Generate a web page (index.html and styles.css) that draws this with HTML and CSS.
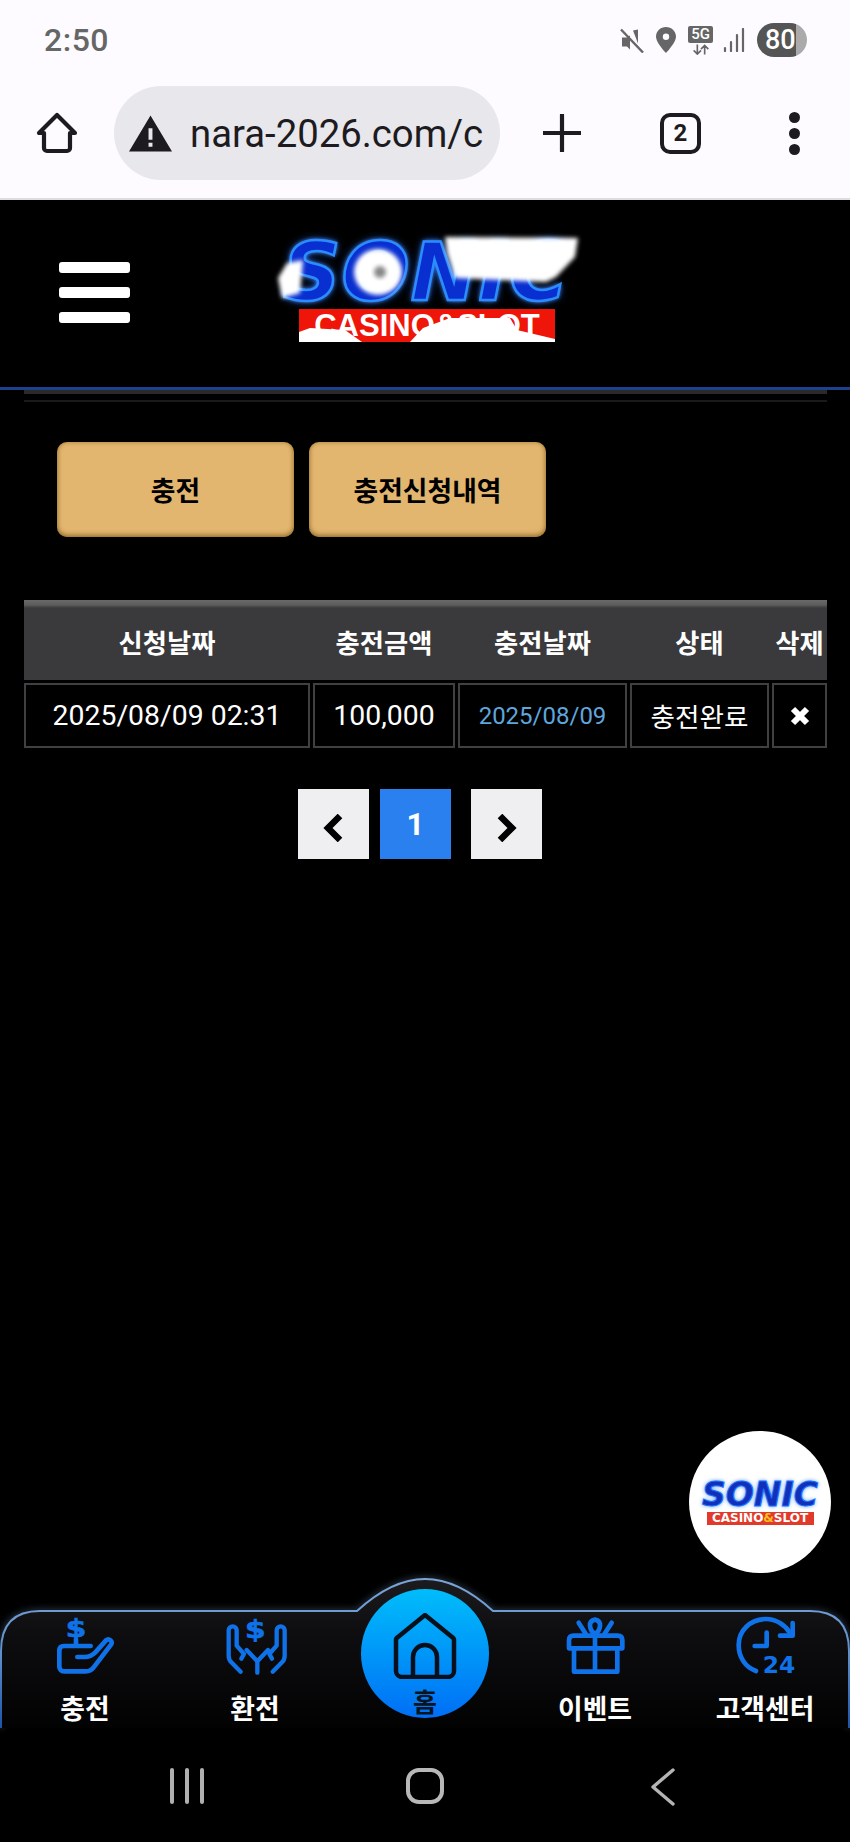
FILE: index.html
```html
<!DOCTYPE html>
<html lang="ko">
<head>
<meta charset="utf-8">
<title>충전</title>
<link rel="stylesheet" href="styles.css">
</head>
<body>
<div class="screen">
  <div class="statusbar">
    <span class="time">2:50</span>
    <div class="status-icons">
      <svg class="si-mute" viewBox="0 0 24 24"><path d="M2 9h5l3-2v14l-3-3H2z M13 2l5-1v14z" fill="#666"/><path d="M1 1l22 23" stroke="#666" stroke-width="2.4"/></svg>
      <svg class="si-pin" viewBox="0 0 20 26"><path fill-rule="evenodd" d="M10 0c5.5 0 10 4.2 10 9.6C20 16 10 26 10 26S0 16 0 9.6C0 4.2 4.500 0 10 0zm0 6.500a3.200 3.200 0 1 0 0 6.400 3.200 3.200 0 0 0 0-6.400z" fill="#666"/></svg>
      <div class="si-net"><span class="si-5g">5G</span><svg viewBox="0 0 24 11" class="si-arrows"><path d="M8 0v10M4 6.500l4 4 4-4M16 11V1M12 5l4-4 4 4" fill="none" stroke="#666" stroke-width="1.800"/></svg></div>
      <svg class="si-signal" viewBox="0 0 22 24"><path d="M2 20v3M8 14v9M14 7v16M20 1v22" stroke="#666" stroke-width="2.200" stroke-linecap="round"/></svg>
      <div class="battery"><span>80</span></div>
    </div>
  </div>

  <div class="browserbar">
    <svg class="b-home" viewBox="0 0 42 42"><path d="M21 3 3 21h5v15a3 3 0 0 0 3 3h20a3 3 0 0 0 3-3V21h5z" fill="none" stroke="#1d1b20" stroke-width="4.200" stroke-linejoin="round"/></svg>
    <div class="urlpill">
      <svg class="b-warn" viewBox="0 0 44 37"><path fill-rule="evenodd" d="M22 0l22 37H0zM20 13v12h4V13zm0 15v4h4v-4z" fill="#1d1b20"/></svg>
      <span class="url">nara-2026.com/c</span>
    </div>
    <svg class="b-plus" viewBox="0 0 38 38"><path d="M19 1v36M1 19h36" stroke="#1d1b20" stroke-width="4.200" stroke-linecap="round"/></svg>
    <div class="tabs">2</div>
    <div class="dots"><i></i><i></i><i></i></div>
  </div>

  <header class="siteheader">
    <div class="burger"><i></i><i></i><i></i></div>
    <div class="logo">
      <div class="logo-word">SONIC</div>
      <div class="logo-bar">CASINO&amp;SLOT</div>
      <svg class="logo-glitch" viewBox="0 0 350 130">
        <defs><filter id="soft" x="-20%" y="-20%" width="140%" height="140%"><feGaussianBlur stdDeviation="2.200"/></filter></defs>
        <g filter="url(#soft)" fill="#fff">
          <polygon points="195,17 328,18 325,37 306,57 296,62 205,58 197,33"/>
          <polygon points="28,58 37,43 53,40 50,73 32,78"/>
          <ellipse cx="128" cy="52" rx="24" ry="23"/>
        </g>
        <ellipse cx="130" cy="52" rx="6" ry="6" fill="#888" filter="url(#soft)"/>
        <polygon points="49,122 49,112 60,108 95,110 112,122" fill="#fff"/>
        <polygon points="160,122 173,108 200,98 260,98 267,110 305,119 305,122" fill="#fff"/>
      </svg>
    </div>
  </header>
  <div class="rule-blue"></div>
  <div class="rule-gray"></div>
  <div class="rule-faint"></div>

  <main class="content">
    <div class="tabsrow">
      <a class="goldbtn">충전</a>
      <a class="goldbtn">충전신청내역</a>
    </div>

    <div class="grid">
      <div class="grid-head grid-cols">
        <span>신청날짜</span><span>충전금액</span><span>충전날짜</span><span>상태</span><span>삭제</span>
      </div>
      <div class="grid-row grid-cols">
        <span class="cell">2025/08/09 02:31</span>
        <span class="cell">100,000</span>
        <span class="cell cell-date">2025/08/09</span>
        <span class="cell cell-ko">충전완료</span>
        <span class="cell"><svg class="x-icon" viewBox="0 0 20 20"><path d="M3 3l14 14M17 3 3 17" stroke="#fff" stroke-width="6"/></svg></span>
      </div>
    </div>

    <div class="pager">
      <a class="page"><svg class="chev" viewBox="0 0 21 28"><path d="M17 2 5 14l12 12" fill="none" stroke="#000" stroke-width="6.500"/></svg></a>
      <a class="page page-on">1</a>
      <a class="page page-next"><svg class="chev" viewBox="0 0 21 28"><path d="M4 2l12 12L4 26" fill="none" stroke="#000" stroke-width="6.500"/></svg></a>
    </div>
  </main>

  <div class="fab">
    <div class="fab-word">SONIC</div>
    <div class="fab-bar">CASINO<b>&amp;</b>SLOT</div>
  </div>

  <nav class="tabbar">
    <svg class="tabbar-bg" viewBox="0 0 850 153">
      <defs>
        <linearGradient id="barfill" x1="0" y1="0" x2="0" y2="1"><stop offset="0" stop-color="#1c1c1e"/><stop offset=".35" stop-color="#0e0e10"/><stop offset="1" stop-color="#020203"/></linearGradient>
        <linearGradient id="barline" x1="0" y1="0" x2="0" y2="1"><stop offset="0" stop-color="#7ba5d8"/><stop offset=".5" stop-color="#5f8fca"/><stop offset="1" stop-color="#1a55a8"/></linearGradient>
        <filter id="barglow" x="-5%" y="-20%" width="110%" height="140%"><feGaussianBlur stdDeviation="3"/></filter>
      </defs>
      <path d="M1 153V76Q1 36 40 36H357Q392 4 425 4 458 4 493 36H810Q849 36 849 76V153" fill="none" stroke="#5d7a9d" stroke-width="4" opacity=".5" filter="url(#barglow)"/>
      <path d="M1 153V76Q1 36 40 36H357Q392 4 425 4 458 4 493 36H810Q849 36 849 76V153" fill="url(#barfill)" stroke="url(#barline)" stroke-width="2"/>
    </svg>
    <a class="tab">
      <svg class="tab-icon" viewBox="165 135 180 180"><g fill="none" stroke="#0f72e8" stroke-width="14" stroke-linecap="round" stroke-linejoin="round"><path d="M228 205v20M232 258h22c14 0 24-6 32-14l32-36a10 10 0 0 1 15 13l-52 68c-6 8-14 12-24 12h-65c-8 0-14-6-14-14v-48c0-10 6-14 14-14h80"/></g><text transform="translate(228 198) scale(1.2 1)" class="icon-text" text-anchor="middle">$</text></svg>
      <span class="tab-label">충전</span>
    </a>
    <a class="tab">
      <svg class="tab-icon" viewBox="675 135 180 180"><g fill="none" stroke="#0f72e8" stroke-width="13" stroke-linecap="round" stroke-linejoin="round"><path d="M772 305v-34l-32-34M772 271l32-34"/><path d="M722 302l-28-28c-6-6-8-12-8-20v-76a12 12 0 0 1 24 0v46l22 25-8 14"/><path d="M818 302l28-28c6-6 8-12 8-20v-76a12 12 0 0 0-24 0v46l-22 25 8 14"/></g><text transform="translate(766 200) scale(1.2 1)" class="icon-text" text-anchor="middle">$</text></svg>
      <span class="tab-label">환전</span>
    </a>
    <a class="tab tab-home">
      <span class="home-disc">
        <svg class="home-icon" viewBox="0 0 66 66"><path d="M6 24 33 2l27 22a4 4 0 0 1 2 4v30a6 6 0 0 1-6 6H10a6 6 0 0 1-6-6V28a4 4 0 0 1 2-4z" fill="none" stroke="#08101c" stroke-width="4.500" stroke-linejoin="round"/><path d="M21 62V44a12 12 0 0 1 24 0v18" fill="none" stroke="#08101c" stroke-width="4.500"/></svg>
        <span class="home-label">홈</span>
      </span>
    </a>
    <a class="tab">
      <svg class="tab-icon" viewBox="405 135 180 180"><g fill="none" stroke="#0f72e8" stroke-width="14" stroke-linejoin="round" stroke-linecap="round"><path d="M432 236v66h130v-66"/><path d="M417 232v-24q0-14 14-14h132q14 0 14 14v24z"/><path d="M495 194v108"/><path d="M495 190c-18-14-22-40 0-44 22 4 18 30 0 44z"/><path d="M446 155l22 35M545 155l-22 35"/></g></svg>
      <span class="tab-label">이벤트</span>
    </a>
    <a class="tab">
      <svg class="tab-icon" viewBox="915 135 180 180"><g fill="none" stroke="#0f72e8" stroke-width="14" stroke-linecap="round" stroke-linejoin="round"><path d="M978 300C945 288 926 258 926 222c0-44 36-78 82-78 30 0 58 18 72 42"/><path d="M1088 156v38h-38"/><path d="M1010 185v40h-36"/></g><text x="1047" y="305" class="icon-24" text-anchor="middle">24</text></svg>
      <span class="tab-label">고객센터</span>
    </a>
  </nav>

  <div class="sysnav">
    <div class="sys-bars"><i></i><i></i><i></i></div>
    <div class="sys-home"></div>
    <svg class="sys-back" viewBox="0 0 26 38"><path d="M23 2 3 19l20 17" fill="none" stroke="#b4b4b4" stroke-width="3.400" stroke-linecap="round" stroke-linejoin="round"/></svg>
  </div>
</div>
</body>
</html>
```
FILE: styles.css
```css
* { box-sizing: border-box; }
html, body { margin: 0; padding: 0; background: #000; }
body { font-family: Roboto, "Noto Sans CJK KR", sans-serif; color: #fff; }
.screen { position: relative; width: 850px; height: 1842px; display: flex; flex-direction: column; overflow: hidden; background: #000; }

.statusbar { height: 63px; flex: none; background: #fdfbff; display: flex; align-items: center; justify-content: space-between; padding: 17px 43px 0 44px; }
.time { font-size: 32px; font-weight: 500; color: #666; letter-spacing: .5px; }
.status-icons { display: flex; align-items: center; gap: 12px; margin-top: 0; }
.si-mute { width: 24px; height: 25px; }
.si-pin { width: 20px; height: 26px; }
.si-net { width: 25px; display: flex; flex-direction: column; align-items: center; gap: 1px; }
.si-5g { width: 25px; height: 17px; background: #666; color: #fff; border-radius: 2px; font-size: 15px; line-height: 17px; font-weight: 500; text-align: center; }
.si-arrows { width: 22px; height: 11px; }
.si-signal { width: 22px; height: 24px; margin-left: -2px; }
.battery { width: 50px; height: 34px; border-radius: 17px; background: linear-gradient(90deg, #555 0 78%, #aaa 78%); font-size: 27px; font-weight: 500; line-height: 34px; color: #fff; padding-left: 8px; }

.browserbar { height: 137px; flex: none; background: #fdfbff; border-bottom: 2px solid #dddce0; display: flex; align-items: center; padding: 5px 0 0 36px; }
.b-home { width: 42px; height: 42px; flex: none; }
.urlpill { margin-left: 36px; width: 386px; height: 94px; flex: none; border-radius: 47px; background: #e8e7ec; display: flex; align-items: center; padding-left: 15px; gap: 18px; overflow: hidden; }
.b-warn { width: 43px; height: 37px; flex: none; }
.url { font-size: 38.300px; color: #1d1b20; white-space: nowrap; }
.b-plus { width: 38px; height: 38px; flex: none; margin-left: 43px; }
.tabs { width: 41px; height: 41px; flex: none; margin-left: 79px; border: 4px solid #1d1b20; border-radius: 10px; color: #1d1b20; font-size: 24px; font-weight: 700; line-height: 33px; text-align: center; }
.dots { margin-left: 87px; width: 12px; display: flex; flex-direction: column; align-items: center; gap: 5px; }
.dots i { display: block; width: 11px; height: 11px; border-radius: 50%; background: #1d1b20; }

.siteheader { height: 187px; flex: none; background: #000; position: relative; padding: 62px 0 0 59px; display: flex; }
.burger { width: 71px; display: flex; flex-direction: column; gap: 14px; }
.burger i { display: block; height: 11px; background: #fff; border-radius: 3px; }
.logo { position: relative; margin: -42px 0 0 120px; width: 350px; height: 130px; padding: 22px 0 0 33px; }
.logo-word { width: 282px; height: 61px; font-family: "DejaVu Sans", sans-serif; font-style: italic; font-weight: 700; font-size: 80px; line-height: 61px; letter-spacing: 1px; color: #0a2fd0; -webkit-text-stroke: 2.500px #2a8dff; text-shadow: 0 0 9px #1668ff, 0 0 4px #bcd8ff; white-space: nowrap; }
.logo-bar { margin: 6px 0 0 16px; width: 256px; height: 33px; background: #ef1508; font-family: "Liberation Sans", sans-serif; font-weight: 700; font-size: 31px; line-height: 33px; color: #fff; text-align: center; white-space: nowrap; overflow: hidden; }
.logo-glitch { position: absolute; left: 0; top: 0; width: 350px; height: 130px; }

.rule-blue { height: 3px; flex: none; background: #1f3f8f; }
.rule-gray { height: 4px; flex: none; margin: 0 23px 0 24px; background: #2a2a2a; }
.rule-faint { height: 2px; flex: none; margin: 6px 23px 0 24px; background: #1a1a1a; }

.content { flex: 1; display: flex; flex-direction: column; padding: 40px 23px 0 24px; }
.tabsrow { display: flex; gap: 15px; padding-left: 33px; }
.goldbtn { width: 237px; height: 95px; border-radius: 10px; background: #e2b66f; box-shadow: inset 0 -2px 5px rgba(120, 80, 20, .6), inset 0 0 4px rgba(120, 80, 20, .4); color: #000; font-size: 26.800px; font-weight: 700; display: flex; align-items: center; justify-content: center; }

.grid { margin-top: 63px; }
.grid-cols { display: grid; grid-template-columns: 286px 142px 169px 139px 55px; column-gap: 3px; }
.grid-head { height: 80px; background: linear-gradient(180deg, #6a6a6a 0, #5c5c5c 5px, #3a393b 8px); align-items: center; font-size: 26.300px; font-weight: 700; text-align: center; padding-top: 3px; white-space: nowrap; }
.grid-row { margin-top: 3px; }
.cell { height: 65px; border: 2px solid #404040; font-size: 28.400px; display: flex; align-items: center; justify-content: center; background: #000; white-space: nowrap; }
.cell-ko { font-size: 26.600px; }
.cell-date { color: #5ea6dc; font-size: 24px; }
.x-icon { width: 20px; height: 20px; }

.pager { margin-top: 41px; display: flex; padding-left: 274px; }
.page { width: 71px; height: 70px; background: #efeef0; display: flex; align-items: center; justify-content: center; font-size: 31px; font-weight: 700; color: #fff; }
.page-on { margin-left: 11px; background: #2a80ee; }
.page-next { margin-left: 20px; }
.chev { width: 21px; height: 28px; margin-top: 8px; }

.fab { position: absolute; left: 689px; top: 1431px; width: 142px; height: 142px; border-radius: 50%; background: #fff; display: flex; flex-direction: column; align-items: center; padding-top: 50px; }
.fab-word { width: 118px; font-family: "DejaVu Sans", sans-serif; font-style: italic; font-weight: 700; font-size: 33px; line-height: 28px; text-align: center; letter-spacing: 0; color: #1230b8; -webkit-text-stroke: 1px #1a70ff; text-shadow: 0 0 4px #3b8cff; white-space: nowrap; }
.fab-bar { margin-top: 3px; width: 107px; height: 13px; background: #e23a2a; color: #fff; font-family: "DejaVu Sans", sans-serif; font-weight: 700; font-size: 12px; line-height: 13px; text-align: center; white-space: nowrap; }
.fab-bar b { color: #f7c21c; }

.tabbar { position: relative; height: 153px; flex: none; display: flex; }
.tabbar-bg { position: absolute; left: 0; top: 0; width: 850px; height: 153px; overflow: visible; }
.tab { position: relative; width: 170px; padding-top: 41px; display: flex; flex-direction: column; align-items: center; color: #fff; }
.tab-icon { width: 60px; height: 60px; display: block; overflow: visible; }
.icon-text { font-family: "DejaVu Sans", sans-serif; font-size: 74px; font-weight: 700; fill: #0f72e8; stroke: #0f72e8; stroke-width: 2px; }
.icon-24 { font-family: "DejaVu Sans", sans-serif; font-size: 70px; font-weight: 700; fill: #0f72e8; }
.tab-label { margin-top: 17px; font-size: 26.800px; font-weight: 700; line-height: 34px; white-space: nowrap; }
.tab-home { padding-top: 14px; }
.home-disc { width: 128px; height: 129px; border-radius: 50%; background: linear-gradient(180deg, #00bdfb, #006ff5); display: flex; flex-direction: column; align-items: center; padding-top: 24px; }
.home-icon { width: 66px; height: 66px; display: block; }
.home-label { margin-top: 11px; font-size: 26px; font-weight: 700; line-height: 26px; color: #0a1420; }

.sysnav { height: 114px; flex: none; background: #000; display: flex; align-items: flex-start; padding: 40px 0 0 170px; }
.sys-bars { width: 34px; height: 36px; display: flex; justify-content: space-between; }
.sys-bars i { display: block; width: 4px; height: 36px; border-radius: 2px; background: #b0b0b0; }
.sys-home { margin-left: 202px; width: 38px; height: 36px; border: 4px solid #b8b8b8; border-radius: 13px; }
.sys-back { margin-left: 206px; width: 26px; height: 38px; }
```
